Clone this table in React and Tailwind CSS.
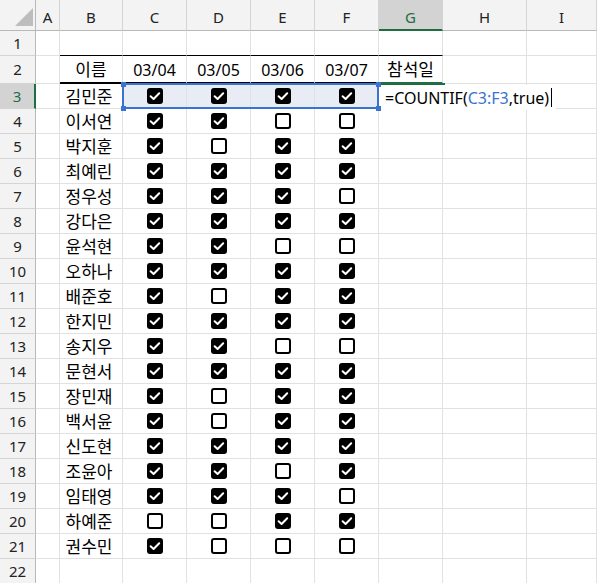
import React from "react";

const data = [
  ["김민준", [1, 1, 1, 1]],
  ["이서연", [1, 1, 0, 0]],
  ["박지훈", [1, 0, 1, 1]],
  ["최예린", [1, 1, 1, 1]],
  ["정우성", [1, 1, 1, 0]],
  ["강다은", [1, 1, 1, 1]],
  ["윤석현", [1, 1, 0, 0]],
  ["오하나", [1, 1, 1, 1]],
  ["배준호", [1, 0, 1, 1]],
  ["한지민", [1, 1, 1, 1]],
  ["송지우", [1, 1, 0, 0]],
  ["문현서", [1, 1, 1, 1]],
  ["장민재", [1, 0, 1, 1]],
  ["백서윤", [1, 0, 1, 1]],
  ["신도현", [1, 1, 1, 1]],
  ["조윤아", [1, 1, 0, 1]],
  ["임태영", [1, 1, 1, 0]],
  ["하예준", [0, 0, 1, 1]],
  ["권수민", [1, 0, 0, 0]],
];

function Check({ on }) {
  if (on) {
    return (
      <div className="w-[16px] h-[16px] rounded-[3px] bg-black flex items-center justify-center">
        <svg width="16" height="16" viewBox="0 0 16 16">
          <path d="M3.6 8.2 L6.6 11 L12.2 5.2" fill="none" stroke="#fff" strokeWidth="2" strokeLinecap="round" strokeLinejoin="round" />
        </svg>
      </div>
    );
  }
  return <div className="w-[16px] h-[16px] rounded-[3px] border-2 border-black bg-white" />;
}

const cell = "border-r border-b border-[#e1e1e1] flex items-center justify-center text-[16px] text-black leading-none";
const colHdr = "border-r border-b border-[#d4d4d4] border-b-[#b8b8b8] bg-[#f3f3f3] flex items-center justify-center text-[15px] text-[#222] pt-[4px]";
const rowHdr = "border-r border-b border-[#d4d4d4] border-r-[#b8b8b8] bg-[#f3f3f3] flex items-center justify-center text-[15px] text-[#222]";

export default function App() {
  const letters = ["A", "B", "C", "D", "E", "F", "G", "H", "I"];
  return (
    <div className="w-[597px] h-[583px] overflow-hidden bg-white font-['Noto_Sans','Noto_Sans_CJK_KR',sans-serif]">
      <div className="relative grid grid-cols-[36px_24px_63px_64px_64px_64px_64px_64px_84px_1fr] grid-rows-[31px_25px_28px_repeat(20,25px)]">
        {/* header row */}
        <div className="border-r border-b border-[#b8b8b8] bg-[#f3f3f3] relative">
          <svg className="absolute left-[15px] top-[8px]" width="19" height="19" viewBox="0 0 19 19">
            <polygon points="18,0 18,18 0,18" fill="#bdbdbd" />
          </svg>
        </div>
        {letters.map((l) =>
          l === "G" ? (
            <div key={l} className="border-r border-[#d4d4d4] border-b-2 border-b-[#1e6e42] bg-[#d3d3d3] flex items-center justify-center text-[15px] text-[#1e6e42] pt-[5px]">
              {l}
            </div>
          ) : (
            <div key={l} className={colHdr}>
              {l}
            </div>
          )
        )}

        {/* row 1 */}
        <div className={rowHdr}>1</div>
        <div className={cell}></div>
        {[0, 1, 2, 3, 4, 5].map((i) => (
          <div key={i} className="border-r border-b border-[#e1e1e1] border-b-black"></div>
        ))}
        <div className={cell}></div>
        <div className={cell}></div>

        {/* row 2 */}
        <div className={rowHdr}>2</div>
        <div className={cell}></div>
        <div className="border-r border-[#e1e1e1] border-b-2 border-b-black flex items-center justify-center text-[17px] text-black pt-[2px]">
          이름
        </div>
        {["03/04", "03/05", "03/06", "03/07"].map((t) => (
          <div key={t} className="border-r border-[#e1e1e1] border-b-2 border-b-black flex items-center justify-center text-[16px] text-black pt-[2px]">
            {t}
          </div>
        ))}
        <div className="border-r border-[#e1e1e1] border-b-2 border-b-[#1e6e42] flex items-center justify-center text-[17px] text-black pt-[2px]">
          참석일
        </div>
        <div className={cell}></div>
        <div className={cell}></div>

        {/* data rows */}
        {data.map(([name, checks], idx) => {
          const r = idx + 3;
          const sel = r === 3;
          return (
            <React.Fragment key={r}>
              {sel ? (
                <div className="border-b border-[#d4d4d4] border-r-2 border-r-[#1e6e42] bg-[#d3d3d3] flex items-center justify-center text-[15px] text-[#1e6e42]">
                  {r}
                </div>
              ) : (
                <div className={rowHdr}>{r}</div>
              )}
              <div className={cell}></div>
              <div className={`${cell} text-[17px] pr-[4px]`}>{name}</div>
              {checks.map((c, j) => (
                <div key={j} className={`${cell} ${sel ? "bg-[#e8ecf4]" : ""}`}>
                  <Check on={c} />
                </div>
              ))}
              <div className={cell}></div>
              <div className={cell}></div>
              <div className={cell}></div>
            </React.Fragment>
          );
        })}
        {/* row 22 */}
        <div className={rowHdr}>22</div>
        {[0, 1, 2, 3, 4, 5, 6, 7, 8].map((i) => (
          <div key={i} className={cell}></div>
        ))}

        {/* edit box over G3 */}
        <div className="absolute left-[379px] top-[85px] w-[177px] h-[25px] bg-white flex items-center pl-[6px] text-[16px] text-black leading-none">
          <span>=COUNTIF(</span>
          <span className="text-[#3a73d0]">C3:F3</span>
          <span>,true)</span>
          <span className="ml-[2px] w-[1px] h-[19px] bg-black"></span>
        </div>
        {/* active cell green lines */}
        <div className="absolute left-[377px] top-[83px] w-[68px] h-[2px] bg-[#1e6e42]"></div>
        <div className="absolute left-[377px] top-[83px] w-[2px] h-[25px] bg-[#1e6e42]"></div>

        {/* selection C3:F3 */}
        <div className="absolute left-[122px] top-[83px] w-[257px] h-[26px] border-2 border-[#3a73d0]"></div>
        <div className="absolute left-[121px] top-[82px] w-[5px] h-[5px] bg-[#3a73d0]"></div>
        <div className="absolute left-[121px] top-[106px] w-[5px] h-[5px] bg-[#3a73d0]"></div>
        <div className="absolute left-[376px] top-[82px] w-[5px] h-[5px] bg-[#3a73d0]"></div>
        <div className="absolute left-[376px] top-[106px] w-[5px] h-[5px] bg-[#3a73d0]"></div>
      </div>
    </div>
  );
}
